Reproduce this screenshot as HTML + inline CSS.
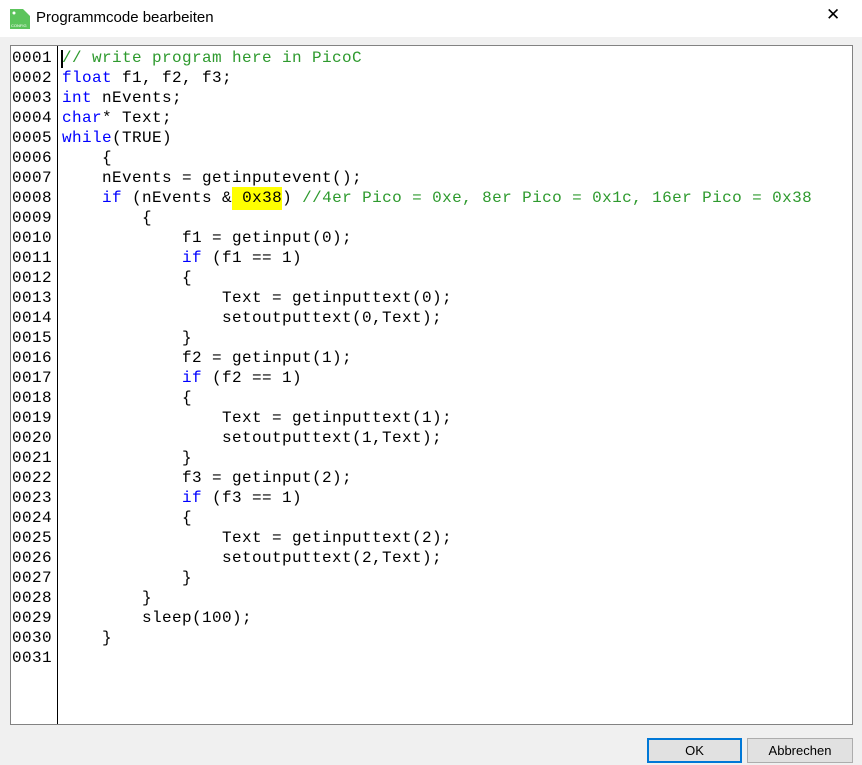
<!DOCTYPE html>
<html><head><meta charset="utf-8">
<style>
body{margin:0;width:862px;height:765px;background:#f0f0f0;position:relative;overflow:hidden;font-family:"Liberation Sans",sans-serif}
.title{position:absolute;left:0;top:0;width:862px;height:37px;background:#fff}
.title .t{position:absolute;left:36px;top:9px;font-size:15px;color:#000}
.close{position:absolute;left:826px;top:5px;font-size:17px;color:#000;font-weight:300}
.ed{position:absolute;left:10px;top:45px;width:841px;height:678px;background:#fff;border:1px solid #828282}
.gut{position:absolute;left:46px;top:0;width:1px;height:678px;background:#000}
.code{position:absolute;top:2px;margin:0;font-family:"Liberation Mono",monospace;font-size:16px;letter-spacing:0.4px;line-height:20px;white-space:pre;color:#000}
.k{color:#0000ff}.c{color:#2e9a2e}
.hl{background:#ffff00;padding:2px 0 3px}
.btn{position:absolute;top:738px;height:23px;background:#e1e1e1;border:1px solid #adadad;font-size:13px;text-align:center;line-height:23px}
</style></head><body>
<div class="title">
<svg style="position:absolute;left:10px;top:9px" width="20" height="20" viewBox="0 0 20 20"><path d="M0 0H13L20 7V20H0Z" fill="#5cc45c"/><circle cx="4" cy="4" r="1.5" fill="#fff"/><text x="1" y="18" font-size="4" fill="#fff" font-family="Liberation Sans">CONFIG</text></svg>
<div class="t">Programmcode bearbeiten</div>
<div class="close">✕</div>
</div>
<div class="ed">
<div class="gut"></div>
<pre class="code" style="left:1px">0001
0002
0003
0004
0005
0006
0007
0008
0009
0010
0011
0012
0013
0014
0015
0016
0017
0018
0019
0020
0021
0022
0023
0024
0025
0026
0027
0028
0029
0030
0031</pre>
<pre class="code" style="left:51px"><span class="c">// write program here in PicoC</span>
<span class="k">float</span> f1, f2, f3;
<span class="k">int</span> nEvents;
<span class="k">char</span>* Text;
<span class="k">while</span>(TRUE)
    {
    nEvents = getinputevent();
    <span class="k">if</span> (nEvents &amp;<span class="hl"> 0x38</span>) <span class="c">//4er Pico = 0xe, 8er Pico = 0x1c, 16er Pico = 0x38</span>
        {
            f1 = getinput(0);
            <span class="k">if</span> (f1 == 1)
            {
                Text = getinputtext(0);
                setoutputtext(0,Text);
            }
            f2 = getinput(1);
            <span class="k">if</span> (f2 == 1)
            {
                Text = getinputtext(1);
                setoutputtext(1,Text);
            }
            f3 = getinput(2);
            <span class="k">if</span> (f3 == 1)
            {
                Text = getinputtext(2);
                setoutputtext(2,Text);
            }
        }
        sleep(100);
    }
</pre>
<div style="position:absolute;left:50px;top:4px;width:2px;height:18px;background:#000"></div>
</div>
<div class="btn" style="left:647px;width:91px;border:2px solid #0078d7;height:21px;line-height:21px">OK</div>
<div class="btn" style="left:747px;width:104px">Abbrechen</div>
</body></html>
